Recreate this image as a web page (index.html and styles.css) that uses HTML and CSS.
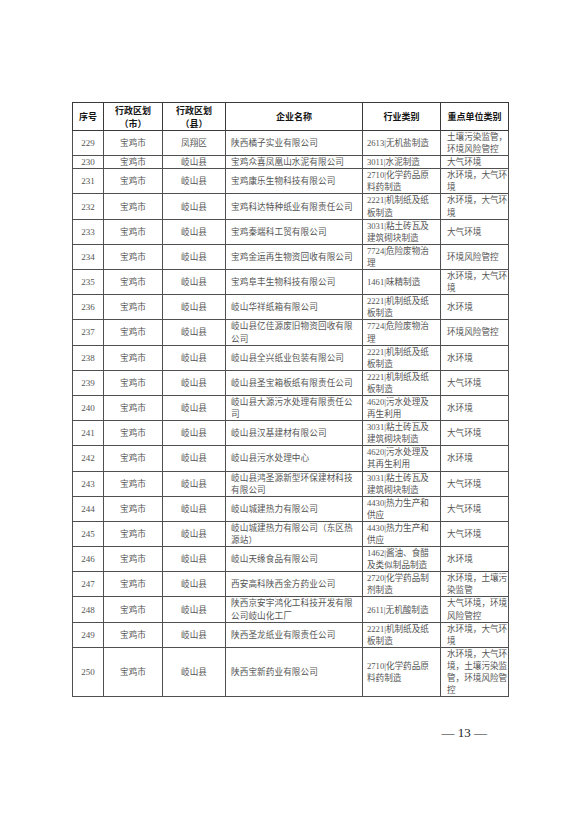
FILE: index.html
```html
<!DOCTYPE html>
<html lang="zh-CN">
<head>
<meta charset="utf-8">
<title>重点排污单位名录</title>
<link rel="stylesheet" href="styles.css">
</head>
<body>
<div class="page">
  <table class="grid">
    <colgroup>
      <col class="w-no"><col class="w-city"><col class="w-county"><col class="w-name"><col class="w-ind"><col class="w-focus">
    </colgroup>
    <thead>
      <tr>
        <th>序号</th>
        <th>行政区划<br>（市）</th>
        <th>行政区划<br>（县）</th>
        <th>企业名称</th>
        <th>行业类别</th>
        <th>重点单位类别</th>
      </tr>
    </thead>
    <tbody>
      <tr><td class="ctr num">229</td><td class="ctr">宝鸡市</td><td class="ctr">凤翔区</td><td class="name">陕西橘子实业有限公司</td><td class="ind">2613|无机盐制造</td><td class="focus">土壤污染监管，<br>环境风险管控</td></tr>
      <tr><td class="ctr num">230</td><td class="ctr">宝鸡市</td><td class="ctr">岐山县</td><td class="name">宝鸡众喜凤凰山水泥有限公司</td><td class="ind">3011|水泥制造</td><td class="focus">大气环境</td></tr>
      <tr><td class="ctr num">231</td><td class="ctr">宝鸡市</td><td class="ctr">岐山县</td><td class="name">宝鸡康乐生物科技有限公司</td><td class="ind">2710|化学药品原<br>料药制造</td><td class="focus">水环境，大气环<br>境</td></tr>
      <tr><td class="ctr num">232</td><td class="ctr">宝鸡市</td><td class="ctr">岐山县</td><td class="name">宝鸡科达特种纸业有限责任公司</td><td class="ind">2221|机制纸及纸<br>板制造</td><td class="focus">水环境，大气环<br>境</td></tr>
      <tr class="heavy"><td class="ctr num">233</td><td class="ctr">宝鸡市</td><td class="ctr">岐山县</td><td class="name">宝鸡秦端科工贸有限公司</td><td class="ind">3031|粘土砖瓦及<br>建筑砌块制造</td><td class="focus">大气环境</td></tr>
      <tr><td class="ctr num">234</td><td class="ctr">宝鸡市</td><td class="ctr">岐山县</td><td class="name">宝鸡金运再生物资回收有限公司</td><td class="ind">7724|危险废物治<br>理</td><td class="focus">环境风险管控</td></tr>
      <tr><td class="ctr num">235</td><td class="ctr">宝鸡市</td><td class="ctr">岐山县</td><td class="name">宝鸡阜丰生物科技有限公司</td><td class="ind">1461|味精制造</td><td class="focus">水环境，大气环<br>境</td></tr>
      <tr><td class="ctr num">236</td><td class="ctr">宝鸡市</td><td class="ctr">岐山县</td><td class="name">岐山华祥纸箱有限公司</td><td class="ind">2221|机制纸及纸<br>板制造</td><td class="focus">水环境</td></tr>
      <tr><td class="ctr num">237</td><td class="ctr">宝鸡市</td><td class="ctr">岐山县</td><td class="name">岐山县亿佳源废旧物资回收有限<br>公司</td><td class="ind">7724|危险废物治<br>理</td><td class="focus">环境风险管控</td></tr>
      <tr><td class="ctr num">238</td><td class="ctr">宝鸡市</td><td class="ctr">岐山县</td><td class="name">岐山县全兴纸业包装有限公司</td><td class="ind">2221|机制纸及纸<br>板制造</td><td class="focus">水环境</td></tr>
      <tr><td class="ctr num">239</td><td class="ctr">宝鸡市</td><td class="ctr">岐山县</td><td class="name">岐山县圣宝箱板纸有限责任公司</td><td class="ind">2221|机制纸及纸<br>板制造</td><td class="focus">大气环境</td></tr>
      <tr><td class="ctr num">240</td><td class="ctr">宝鸡市</td><td class="ctr">岐山县</td><td class="name">岐山县大源污水处理有限责任公<br>司</td><td class="ind">4620|污水处理及<br>再生利用</td><td class="focus">水环境</td></tr>
      <tr><td class="ctr num">241</td><td class="ctr">宝鸡市</td><td class="ctr">岐山县</td><td class="name">岐山县汉基建材有限公司</td><td class="ind">3031|粘土砖瓦及<br>建筑砌块制造</td><td class="focus">大气环境</td></tr>
      <tr class="heavy"><td class="ctr num">242</td><td class="ctr">宝鸡市</td><td class="ctr">岐山县</td><td class="name">岐山县污水处理中心</td><td class="ind">4620|污水处理及<br>其再生利用</td><td class="focus">水环境</td></tr>
      <tr><td class="ctr num">243</td><td class="ctr">宝鸡市</td><td class="ctr">岐山县</td><td class="name">岐山县鸿圣源新型环保建材科技<br>有限公司</td><td class="ind">3031|粘土砖瓦及<br>建筑砌块制造</td><td class="focus">大气环境</td></tr>
      <tr><td class="ctr num">244</td><td class="ctr">宝鸡市</td><td class="ctr">岐山县</td><td class="name">岐山城建热力有限公司</td><td class="ind">4430|热力生产和<br>供应</td><td class="focus">大气环境</td></tr>
      <tr><td class="ctr num">245</td><td class="ctr">宝鸡市</td><td class="ctr">岐山县</td><td class="name">岐山城建热力有限公司（东区热<br>源站）</td><td class="ind">4430|热力生产和<br>供应</td><td class="focus">大气环境</td></tr>
      <tr><td class="ctr num">246</td><td class="ctr">宝鸡市</td><td class="ctr">岐山县</td><td class="name">岐山天缘食品有限公司</td><td class="ind">1462|酱油、食醋<br>及类似制品制造</td><td class="focus">水环境</td></tr>
      <tr><td class="ctr num">247</td><td class="ctr">宝鸡市</td><td class="ctr">岐山县</td><td class="name">西安高科陕西金方药业公司</td><td class="ind">2720|化学药品制<br>剂制造</td><td class="focus">水环境，土壤污<br>染监管</td></tr>
      <tr class="heavy"><td class="ctr num">248</td><td class="ctr">宝鸡市</td><td class="ctr">岐山县</td><td class="name">陕西京安宇鸿化工科技开发有限<br>公司岐山化工厂</td><td class="ind">2611|无机酸制造</td><td class="focus">大气环境，环境<br>风险管控</td></tr>
      <tr><td class="ctr num">249</td><td class="ctr">宝鸡市</td><td class="ctr">岐山县</td><td class="name">陕西圣龙纸业有限责任公司</td><td class="ind">2221|机制纸及纸<br>板制造</td><td class="focus">水环境，大气环<br>境</td></tr>
      <tr><td class="ctr num">250</td><td class="ctr">宝鸡市</td><td class="ctr">岐山县</td><td class="name">陕西宝新药业有限公司</td><td class="ind">2710|化学药品原<br>料药制造</td><td class="focus">水环境，大气环<br>境，土壤污染监<br>管，环境风险管<br>控</td></tr>
    </tbody>
  </table>
  <div class="folio">— 13 —</div>
</div>
</body>
</html>
```

FILE: styles.css
```css
html, body {
  margin: 0;
  padding: 0;
  background: #ffffff;
}

.page {
  width: 578px;
  height: 818px;
  padding: 102px 0 0 72px;
  box-sizing: border-box;
}

.grid {
  width: 436px;
  border-collapse: collapse;
  table-layout: fixed;
  border: 1.6px solid #1e1e1e;
  font-family: "Liberation Serif", "Noto Sans CJK SC", serif;
  color: #555555;
}

.w-no { width: 31px; }
.w-city { width: 59px; }
.w-county { width: 63px; }
.w-name { width: 137px; }
.w-ind { width: 78px; }
.w-focus { width: 68px; }

.grid th {
  font-family: "Noto Sans CJK SC", sans-serif;
  font-weight: 700;
  font-size: 9px;
  line-height: 13px;
  color: #151515;
  padding: 0.5px 2px;
  text-align: center;
  vertical-align: middle;
  border: 1px solid #3a3a3a;
  white-space: nowrap;
}

.grid td {
  font-size: 8.6px;
  line-height: 12.1px;
  padding: 0 3px;
  vertical-align: middle;
  border: 1px solid #505050;
  white-space: nowrap;
  overflow: hidden;
}

.grid tr.heavy td {
  border-top: 1.6px solid #2a2a2a;
}

.grid td.ctr {
  text-align: center;
}

.grid td.num {
  font-size: 9px;
}

.grid td.name {
  padding-left: 5px;
  letter-spacing: 0.1px;
}

.grid td.ind {
  padding-left: 4px;
}

.grid td.focus {
  padding-left: 6px;
}

.folio {
  width: 436px;
  box-sizing: border-box;
  padding: 29px 21px 0 0;
  text-align: right;
  font-family: "Liberation Serif", "DejaVu Serif", serif;
  font-size: 13px;
  line-height: 14px;
  color: #222;
}
```
